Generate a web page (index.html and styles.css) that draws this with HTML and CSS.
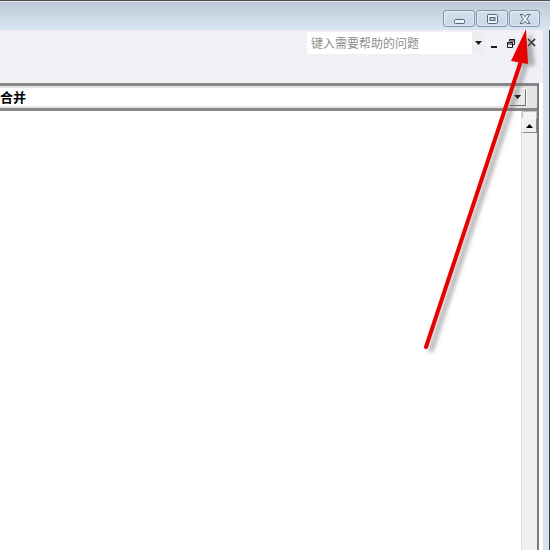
FILE: index.html
```html
<!DOCTYPE html>
<html>
<head>
  <meta charset="utf-8">
  <meta name="viewport" content="width=device-width">
  <title>帮助</title>
  <link rel="stylesheet" href="styles.css">
</head>
<body>
  <section class="window">
    <div class="titlebar">
      <button class="capBtn" title="最小化">
        <svg width="11" height="5" viewBox="0 0 11 5"><rect x="0.5" y="0.5" width="10" height="4" rx="1" fill="#eef2f7" stroke="#56667c"/></svg>
      </button>
      <button class="capBtn" title="最大化">
        <svg width="11" height="10" viewBox="0 0 11 10"><rect x="0.5" y="0.5" width="10" height="9" rx="1" fill="#eef2f7" stroke="#56667c"/><rect x="3" y="3.5" width="5" height="3" fill="#b9c6d4" stroke="#56667c"/></svg>
      </button>
      <button class="capBtn capClose" title="关闭">
        <svg width="12" height="10" viewBox="0 0 12 10"><path d="M1 0.5h3l2 2.3 2-2.3h3l-3.3 4.5 3.3 4.5h-3l-2-2.3-2 2.3h-3l3.3-4.5z" fill="#eef2f7" stroke="#56667c" stroke-linejoin="round"/></svg>
      </button>
    </div>
    <div class="main">
      <div class="inner">
        <div class="toolbar">
          <div class="help">
            <div class="helpInput">键入需要帮助的问题</div>
            <div class="helpDrop">
              <svg width="7" height="4" viewBox="0 0 7 4"><path d="M0 0h7l-3.5 4z" fill="#1a1a1a"/></svg>
            </div>
          </div>
          <div class="mdi">
            <svg class="mdiMin" width="8" height="8" viewBox="0 0 8 8"><rect x="1" y="6" width="6" height="2" fill="#1a1a1a"/></svg>
            <svg class="mdiRestore" width="8" height="9" viewBox="0 0 8 9"><path d="M2.5 0.5h5v5h-2M0.5 3.5h5v5h-5z M0.5 3.5h5v1.5h-5z M2.5 0.5h5v1.5h-5z" fill="none" stroke="#1a1a1a"/></svg>
            <svg class="mdiClose" width="9" height="9" viewBox="0 0 9 9"><path d="M1 1l7 7M8 1l-7 7" stroke="#1a1a1a" stroke-width="1.5"/></svg>
          </div>
        </div>
        <div class="doc">
          <div class="formula">
            <div class="combo">
              <span class="comboText">合并</span>
              <span class="comboBtn">
                <svg width="7" height="4" viewBox="0 0 7 4"><path d="M0 0h7l-3.5 4z" fill="#000"/></svg>
              </span>
            </div>
          </div>
          <div class="sheet">
            <div class="canvas"></div>
            <div class="vscroll">
              <div class="split"></div>
              <div class="upBtn">
                <svg width="7" height="4" viewBox="0 0 7 4"><path d="M3.5 0l3.5 4h-7z" fill="#000"/></svg>
              </div>
            </div>
          </div>
        </div>
      </div>
      <div class="edge"></div>
    </div>

    <!-- red pointer drawn over the window -->
    <svg class="pointer" width="550" height="550" viewBox="0 0 550 550">
      <defs>
        <filter id="soft" x="-20%" y="-20%" width="140%" height="140%">
          <feGaussianBlur stdDeviation="2"/>
        </filter>
      </defs>
      <g filter="url(#soft)" opacity="0.55">
        <line x1="431" y1="350" x2="525" y2="66" stroke="#707070" stroke-width="5" stroke-linecap="round"/>
        <path d="M531 32l4 34-18-2z" fill="#707070"/>
      </g>
      <line x1="426" y1="347" x2="520" y2="64" stroke="#e60000" stroke-width="4" stroke-linecap="round"/>
      <path d="M526 29l2 35-17-3z" fill="#e60000"/>
    </svg>
  </section>
</body>
</html>
```

FILE: styles.css
```css
html, body {
  margin: 0;
  padding: 0;
}

body {
  width: 550px;
  height: 550px;
  overflow: hidden;
  font-family: "Noto Sans CJK SC", "Liberation Sans", sans-serif;
}

.window {
  position: relative;
  display: flex;
  flex-direction: column;
  width: 550px;
  height: 550px;
}

.titlebar {
  box-sizing: border-box;
  display: flex;
  justify-content: flex-end;
  align-items: flex-start;
  height: 30px;
  padding: 9px 10px 0 0;
  border-top: 1px solid #4e4e4e;
  box-shadow: inset 0 1px 0 #e4e8ec;
  background: linear-gradient(#bccad7, #d8e5f3);
}

.capBtn {
  box-sizing: border-box;
  display: flex;
  justify-content: center;
  align-items: center;
  width: 32px;
  height: 17px;
  margin-left: 1px;
  padding: 0;
  border: 1px solid #8596ab;
  border-radius: 3px;
  background: linear-gradient(#d3dfec, #c9d7e6);
  box-shadow: inset 0 0 0 1px rgba(255, 255, 255, 0.45);
}
.capBtn:first-child svg {
  margin-top: 5px;
}
.capClose {
  width: 31px;
}

.main {
  flex: 1;
  display: flex;
  flex-direction: row;
}

.inner {
  flex: 1;
  display: flex;
  flex-direction: column;
  background-color: #ffffff;
}

.toolbar {
  box-sizing: border-box;
  display: flex;
  justify-content: flex-end;
  align-items: flex-start;
  height: 53px;
  padding: 2px 5px 0 0;
  background-color: #f0f0f6;
}

.help {
  display: flex;
  height: 22px;
  background-color: #ffffff;
}
.helpInput {
  width: 161px;
  padding-left: 4px;
  font-size: 12px;
  line-height: 21px;
  color: #8e8e8e;
}
.helpDrop {
  display: flex;
  justify-content: center;
  align-items: center;
  width: 13px;
  background-color: #eeeef2;
}

.mdi {
  display: flex;
  align-items: center;
  width: 53px;
  height: 22px;
}
.mdiMin {
  margin-left: 5px;
  margin-top: 2px;
}
.mdiRestore {
  margin-left: 9px;
}
.mdiClose {
  margin-left: 12px;
  margin-top: -1px;
}

.doc {
  flex: 1;
  display: flex;
  flex-direction: column;
  margin-right: 4px;
  border-top: 3px solid #878787;
  border-right: 2px solid #7b7b7b;
}

.formula {
  padding: 2px 10px 2px 0;
  border-bottom: 3px solid #878787;
  background-color: #e4e4e4;
}
.combo {
  display: flex;
  align-items: center;
  justify-content: space-between;
  height: 18px;
  background-color: #ffffff;
}
.comboText {
  font-size: 13px;
  font-weight: bold;
  line-height: 18px;
  color: #000000;
}
.comboBtn {
  box-sizing: border-box;
  display: flex;
  justify-content: center;
  align-items: center;
  width: 17px;
  height: 17px;
  margin-right: 1px;
  border: 1px solid;
  border-color: #f4f4f4 #6d6d6d #6d6d6d #f4f4f4;
  background-color: #ececec;
}

.sheet {
  flex: 1;
  display: flex;
  flex-direction: row;
}
.canvas {
  flex: 1;
  background-color: #ffffff;
}
.vscroll {
  box-sizing: border-box;
  width: 16px;
  border-left: 1px solid #dcdcdc;
  background-color: #f0f0f0;
}
.split {
  box-sizing: border-box;
  height: 7px;
  border: 1px solid #c4c4c4;
  border-bottom: none;
  background-color: #f4f4f4;
}
.upBtn {
  box-sizing: border-box;
  display: flex;
  justify-content: center;
  align-items: center;
  height: 15px;
  border: 1px solid;
  border-color: #fafafa #8a8a8a #8a8a8a #fafafa;
  background-color: #efefef;
}

.edge {
  width: 6px;
  border-right: 1px solid #3c3c3c;
  background-color: #d3e1f0;
}

.pointer {
  position: absolute;
  top: 0;
  left: 0;
  pointer-events: none;
}
```
